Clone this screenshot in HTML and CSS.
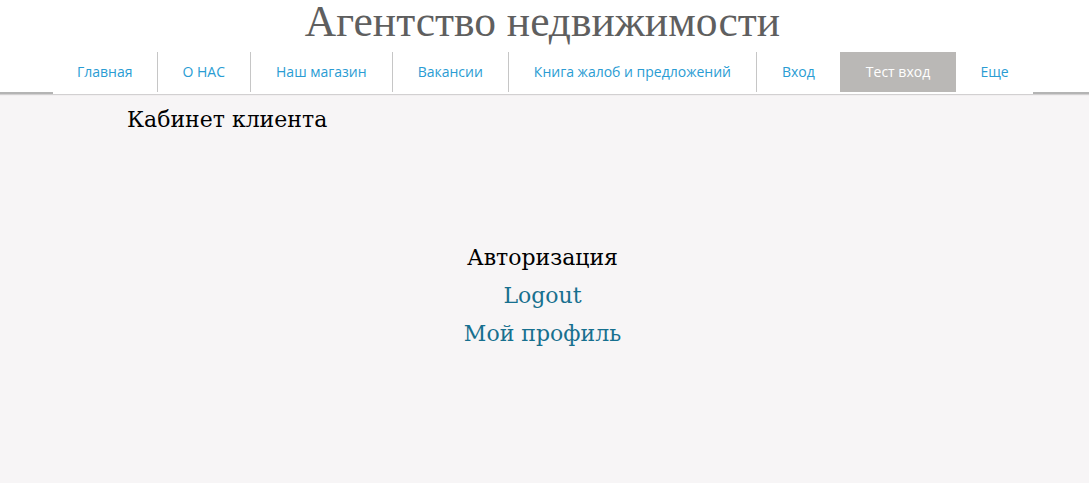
FILE: index.html
```html
<!DOCTYPE html>
<html lang="ru">
<head>
<meta charset="utf-8">
<title>Агентство недвижимости</title>
<link rel="stylesheet" href="styles.css">
</head>
<body>
<header class="header">
  <h1 class="site-title">Агентство недвижимости</h1>
  <div class="nav-wrap">
    <nav class="nav">
      <a class="nav-item first" href="#">Главная</a>
      <a class="nav-item" href="#">О НАС</a>
      <a class="nav-item" href="#">Наш магазин</a>
      <a class="nav-item" href="#">Вакансии</a>
      <a class="nav-item" href="#">Книга жалоб и предложений</a>
      <a class="nav-item" href="#">Вход</a>
      <a class="nav-item active" href="#">Тест вход</a>
      <a class="nav-item last" href="#">Еще</a>
    </nav>
  </div>
</header>
<main class="main">
  <h2 class="cabinet">Кабинет клиента</h2>
  <div class="auth">
    <div class="auth-title">Авторизация</div>
    <a class="auth-link" href="#">Logout</a>
    <a class="auth-link" href="#">Мой профиль</a>
  </div>
</main>
</body>
</html>
```

FILE: styles.css
```css
html, body {
  margin: 0;
  padding: 0;
  height: 100%;
}
body {
  background: #f7f5f6;
  font-family: "DejaVu Serif", "Liberation Serif", serif;
}
.header {
  background: #fff;
  padding-top: 1px;
}
.site-title {
  margin: 0;
  height: 51px;
  text-align: center;
  font-family: "Liberation Serif", serif;
  font-weight: normal;
  font-size: 43.5px;
  line-height: 40px;
  padding-right: 4px;
  color: #5f5f5f;
}
.nav-wrap {
  border-bottom: 2px solid #b4b4b4;
  box-shadow: 0 1px 1px rgba(0,0,0,0.15);
  height: 40px;
  background: #fff;
}
.nav {
  display: flex;
  margin: 0 56px 0 53px;
  height: 42px;
  background: #fff;
}
.nav-item {
  display: flex;
  align-items: center;
  padding: 0 25px 2px 25px;
  height: 40px;
  font-family: "Open Sans", sans-serif;
  font-size: 14px;
  color: #2a9cd3;
  text-decoration: none;
  border-right: 1px solid #c6c6c6;
  box-sizing: border-box;
}
.nav-item.first {
  padding: 0 24px 2px 24px;
}
.nav-item.active {
  background: #bab8b6;
  color: #fff;
  border-right: none;
  padding: 0 26px 2px 26px;
}
.nav-item:nth-child(6) {
  border-right: none;
}
.nav-item.last {
  border-right: none;
  flex: 1;
  justify-content: center;
  padding: 0 0 2px 0;
}
.cabinet {
  margin: 0;
  padding: 12px 0 0 127px;
  font-family: "DejaVu Serif", serif;
  font-weight: normal;
  font-size: 22px;
  line-height: 28px;
  color: #000;
}
.auth {
  display: flex;
  flex-direction: column;
  align-items: center;
  margin-top: 105px;
  padding-right: 4px;
}
.auth-title {
  font-size: 22px;
  line-height: 38px;
  color: #000;
}
.auth-link {
  font-size: 22px;
  line-height: 38px;
  color: #17708f;
  text-decoration: none;
}
```
